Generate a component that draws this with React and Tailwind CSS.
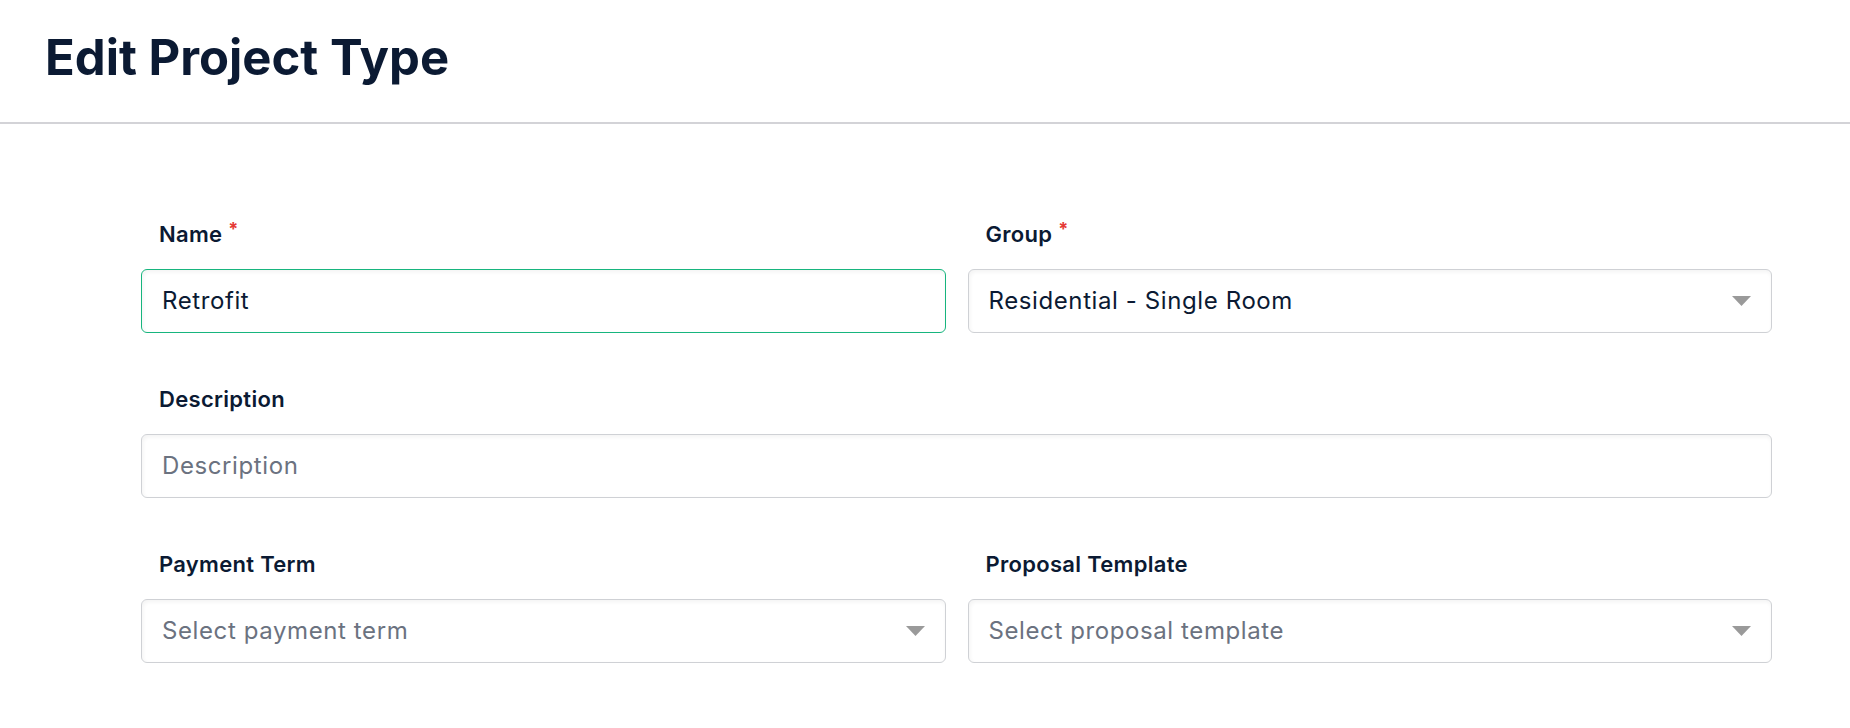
import React from 'react';

const font = { fontFamily: 'Inter, "Liberation Sans", sans-serif' };

const Label = ({ children, required }) => (
  <div className="h-[30px] mb-[20px] pl-[18px] flex items-center text-[22px] leading-[30px] font-semibold tracking-[0.3px] text-[#0b1a33]">
    <span>{children}</span>
    {required && <span className="ml-[6px] self-start mt-[1px] text-[18px] leading-[18px] font-bold text-[#e53935]">*</span>}
  </div>
);

const Caret = () => (
  <svg width="19" height="10" viewBox="0 0 19 10" className="shrink-0">
    <path d="M0 0 H19 L9.5 10 Z" fill="#9a9a9a" />
  </svg>
);

const Select = ({ value, placeholder }) => (
  <div className="h-[64px] flex items-center justify-between pl-[20px] pr-[20px] rounded-[6px] border border-[#cfd1d5] bg-white shadow-[inset_1px_2px_4px_rgba(0,0,0,0.05)]">
    {value ? (
      <span className="text-[24px] tracking-[0.6px] text-[#0b1a33]">{value}</span>
    ) : (
      <span className="text-[24px] tracking-[0.6px] text-[#6b7280]">{placeholder}</span>
    )}
    <Caret />
  </div>
);

const EditProjectType = () => {
  return (
    <div className="min-h-screen bg-white" style={font}>
      {/* Header */}
      <header className="pt-[28px] pb-[34px] pl-[45px] border-b-2 border-[#d3d3d7]">
        <h1 className="text-[49px] leading-[60px] font-bold text-[#0b1a33]">Edit Project Type</h1>
      </header>

      {/* Form */}
      <div className="pt-[95px] pl-[141px]">
        <div className="w-[1631px] flex flex-col gap-[51px]">
          <div className="grid grid-cols-2 gap-[22px]">
            <div>
              <Label required>Name</Label>
              <div className="h-[64px] flex items-center pl-[20px] rounded-[6px] border border-[#17b57e] bg-white shadow-[inset_1px_2px_4px_rgba(0,0,0,0.05)]">
                <span className="text-[24px] tracking-[0.6px] text-[#0b1a33]">Retrofit</span>
              </div>
            </div>
            <div>
              <Label required>Group</Label>
              <Select value="Residential - Single Room" />
            </div>
          </div>

          <div>
            <Label>Description</Label>
            <div className="h-[64px] flex items-center pl-[20px] rounded-[6px] border border-[#cfd1d5] bg-white shadow-[inset_1px_2px_4px_rgba(0,0,0,0.05)]">
              <span className="text-[24px] tracking-[0.6px] text-[#6b7280]">Description</span>
            </div>
          </div>

          <div className="grid grid-cols-2 gap-[22px]">
            <div>
              <Label>Payment Term</Label>
              <Select placeholder="Select payment term" />
            </div>
            <div>
              <Label>Proposal Template</Label>
              <Select placeholder="Select proposal template" />
            </div>
          </div>
        </div>
      </div>
    </div>
  );
};

export default EditProjectType;
